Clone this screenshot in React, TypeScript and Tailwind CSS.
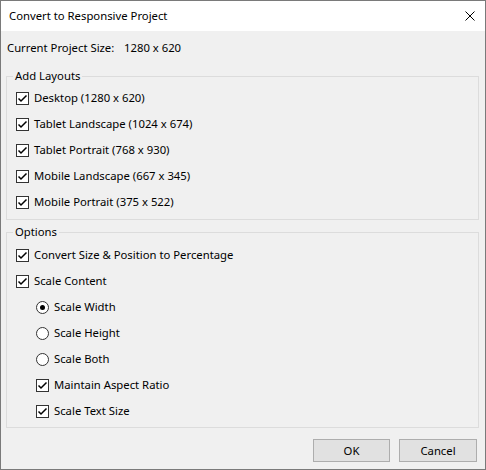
import React from "react";

const layouts = [
  "Desktop (1280 x 620)",
  "Tablet Landscape (1024 x 674)",
  "Tablet Portrait (768 x 930)",
  "Mobile Landscape (667 x 345)",
  "Mobile Portrait (375 x 522)",
];

function CheckBox({ checked = true }: { checked?: boolean }) {
  return (
    <span className="flex h-[13px] w-[13px] shrink-0 items-center justify-center border border-[#333333] bg-white">
      {checked && (
        <svg width="11" height="11" viewBox="0 0 11 11" fill="none">
          <path d="M1.5 5.5 L4 8 L9.5 2.5" stroke="#000" strokeWidth="1.5" />
        </svg>
      )}
    </span>
  );
}

function Radio({ checked = false }: { checked?: boolean }) {
  return (
    <span className="flex h-[13px] w-[13px] shrink-0 items-center justify-center rounded-full border border-[#333333] bg-white">
      {checked && <span className="h-[5px] w-[5px] rounded-full bg-black" />}
    </span>
  );
}

function Row({
  children,
  indent = false,
  label,
}: {
  children: React.ReactNode;
  indent?: boolean;
  label: string;
}) {
  return (
    <div className={"flex h-[26px] items-center gap-[5px] " + (indent ? "pl-[20px]" : "")}>
      {children}
      <span>{label}</span>
    </div>
  );
}

export default function App() {
  return (
    <div className="flex h-[470px] w-[486px] flex-col border border-[#7a7a7a] bg-[#f0f0f0] font-['Segoe_UI','Noto_Sans',sans-serif] text-[11.3px] leading-[16px] text-black">
      <div className="flex h-[30px] shrink-0 items-center justify-between bg-white pl-[8px] pr-[10px]">
        <span>Convert to Responsive Project</span>
        <svg width="10" height="10" viewBox="0 0 10 10" fill="none">
          <path d="M0.5 0.5 L9.5 9.5 M9.5 0.5 L0.5 9.5" stroke="#000" strokeWidth="1" />
        </svg>
      </div>

      <div className="flex flex-1 flex-col pl-[5px] pr-[6px]">
        <div className="mt-[9px] flex h-[16px] items-center pl-[1px]">
          <span className="w-[117px] shrink-0">Current Project Size:</span>
          <span>1280 x 620</span>
        </div>

        <fieldset className="mt-[12px] border border-[#dcdcdc] px-[9px] pb-[4px] pt-[1px]">
          <legend className="ml-[-3px] px-[2px]">Add Layouts</legend>
          {layouts.map((l) => (
            <Row key={l} label={l}>
              <CheckBox />
            </Row>
          ))}
        </fieldset>

        <fieldset className="mt-[4px] border border-[#dcdcdc] px-[9px] pb-[3px] pt-[2px]">
          <legend className="ml-[-3px] px-[2px]">Options</legend>
          <Row label="Convert Size & Position to Percentage">
            <CheckBox />
          </Row>
          <Row label="Scale Content">
            <CheckBox />
          </Row>
          <Row indent label="Scale Width">
            <Radio checked />
          </Row>
          <Row indent label="Scale Height">
            <Radio />
          </Row>
          <Row indent label="Scale Both">
            <Radio />
          </Row>
          <Row indent label="Maintain Aspect Ratio">
            <CheckBox />
          </Row>
          <Row indent label="Scale Text Size">
            <CheckBox />
          </Row>
        </fieldset>

        <div className="mt-[11px] flex justify-end gap-[9px] pr-[2px]">
          <button className="h-[23px] w-[77px] border border-[#adadad] bg-[#e1e1e1]">OK</button>
          <button className="h-[23px] w-[78px] border border-[#adadad] bg-[#e1e1e1]">Cancel</button>
        </div>
      </div>
    </div>
  );
}
